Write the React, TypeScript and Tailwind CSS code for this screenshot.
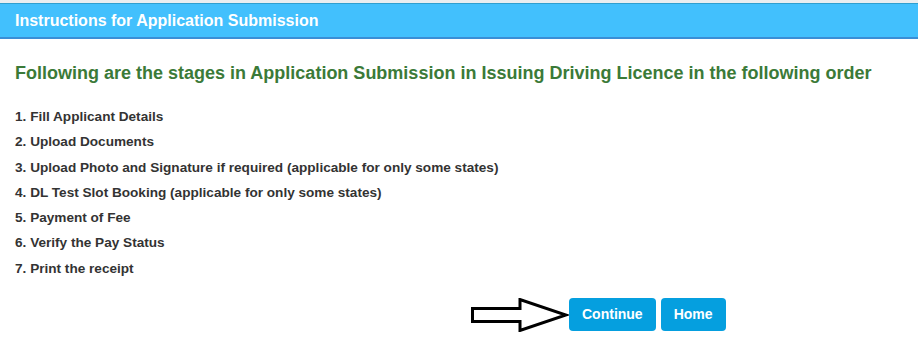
import React from 'react';

const steps = [
  'Fill Applicant Details',
  'Upload Documents',
  'Upload Photo and Signature if required (applicable for only some states)',
  'DL Test Slot Booking (applicable for only some states)',
  'Payment of Fee',
  'Verify the Pay Status',
  'Print the receipt',
];

function Arrow() {
  return (
    <svg width="98" height="34" viewBox="0 0 98 34" className="block">
      <path
        d="M1.5 10.5 H49 V1.5 L95 17 L49 32.5 V23.5 H1.5 Z"
        fill="white"
        stroke="black"
        strokeWidth="3"
        strokeLinejoin="miter"
      />
    </svg>
  );
}

export default function App() {
  return (
    <div className="w-[918px] h-[342px] bg-white font-['Liberation_Sans',Arial,sans-serif] pt-[3px] bg-[linear-gradient(#e9eef1_3px,white_3px)]">
      <div className="h-[36px] bg-[#42c0fd] border-t border-[#2f9fd0] border-b-2 border-b-[#3a8ed6] flex items-center px-[15px]">
        <span className="text-white font-bold text-[16px]">Instructions for Application Submission</span>
      </div>
      <div className="px-[15px]">
        <h2 className="mt-[22px] text-[#3b7a38] font-bold text-[18px] leading-[24px]">
          Following are the stages in Application Submission in Issuing Driving Licence in the following order
        </h2>
        <ol className="mt-[23px] flex flex-col gap-[7.3px]">
          {steps.map((s, i) => (
            <li key={s} className="text-[#333333] font-bold text-[13.6px] leading-[18px]">
              {i + 1}. {s}
            </li>
          ))}
        </ol>
        <div className="mt-[20px] flex items-center pl-[456px]">
          <Arrow />
          <button className="h-[33px] px-[13px] rounded-[4px] bg-[#059fdf] text-white font-bold text-[14px]">
            Continue
          </button>
          <button className="ml-[5px] h-[33px] px-[13px] rounded-[4px] bg-[#059fdf] text-white font-bold text-[14px]">
            Home
          </button>
        </div>
      </div>
    </div>
  );
}
